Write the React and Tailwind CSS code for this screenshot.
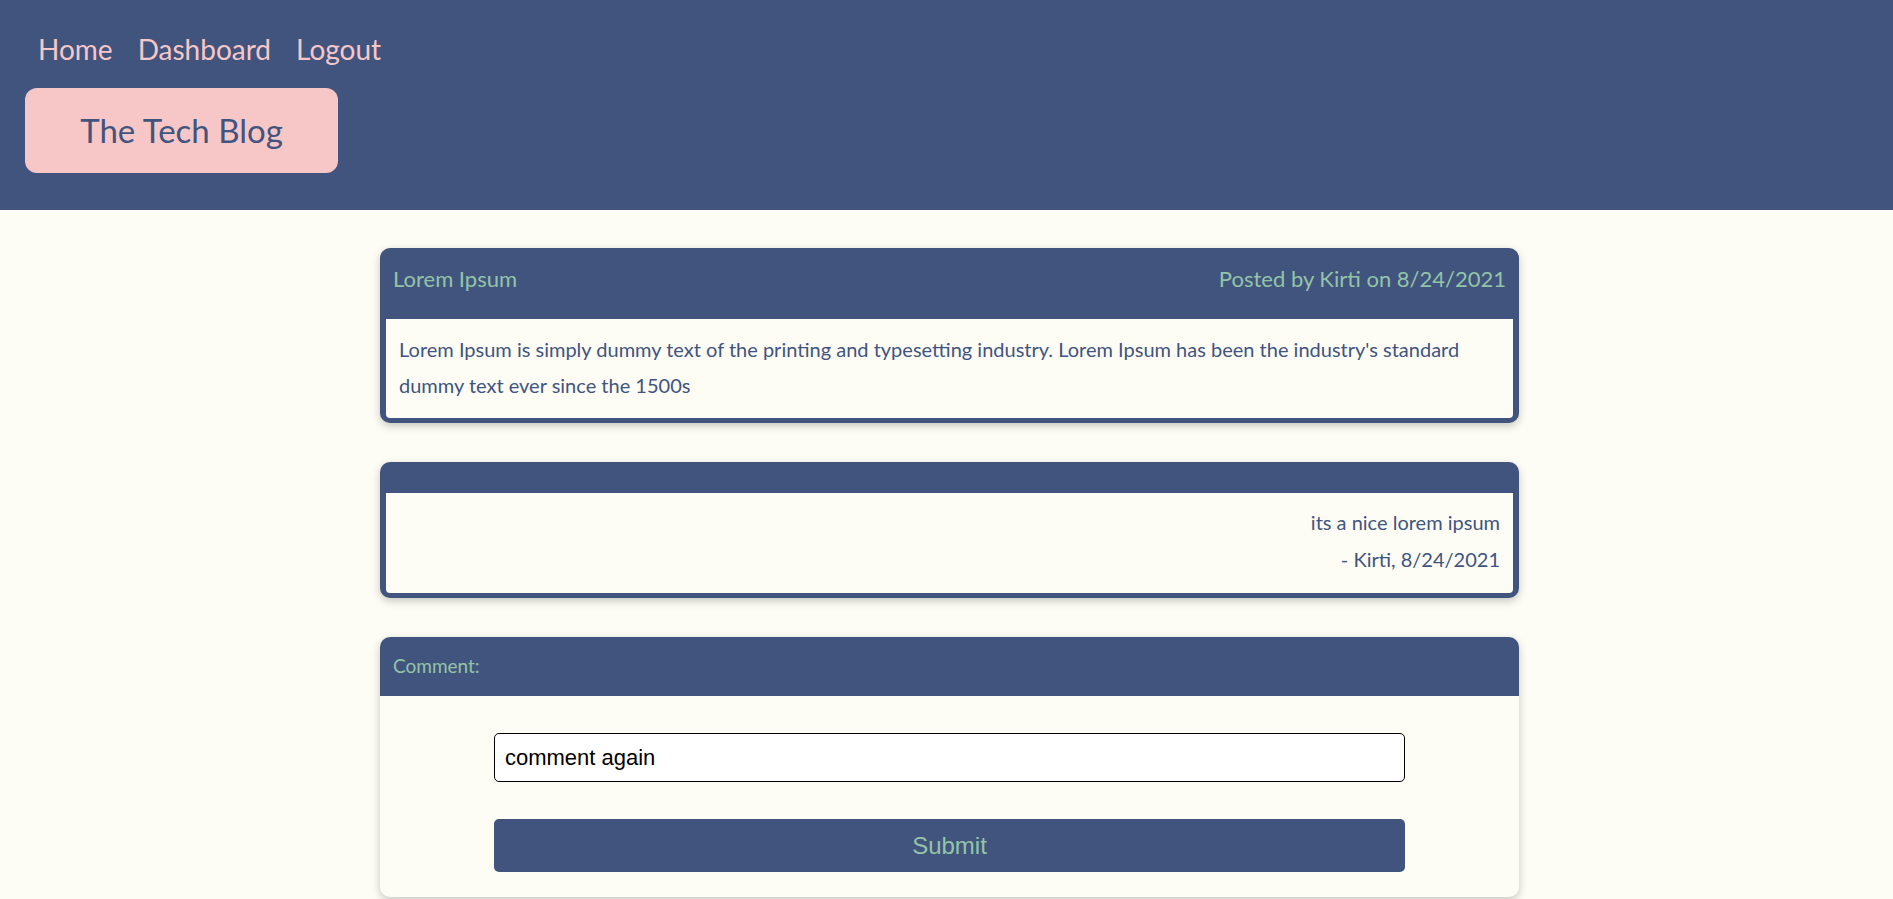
import { useState } from 'react';

const font = { fontFamily: 'Lato, "Noto Sans", sans-serif' };

function Header() {
  return (
    <header className="h-[210px] bg-[#41547e]">
      <nav className="flex gap-[25px] pl-[38px] pt-[33px] text-[28px] leading-8 text-[#f7c7c7]">
        <a href="#">Home</a>
        <a href="#">Dashboard</a>
        <a href="#">Logout</a>
      </nav>
      <div className="ml-[25px] mt-[23px] flex h-[85px] w-[313px] items-center justify-center rounded-[12px] bg-[#f7c7c7]">
        <h1 className="text-[33px] text-[#41547e]">The Tech Blog</h1>
      </div>
    </header>
  );
}

function PostCard() {
  return (
    <section className="rounded-[10px] bg-[#41547e] px-[6px] pb-[5px] shadow-[0_3px_8px_rgba(0,0,0,0.22)]">
      <div className="flex h-[71px] justify-between px-[7px] pt-[18px] text-[22px] leading-[26px] text-[#93c4a7]">
        <span>Lorem Ipsum</span>
        <span>Posted by Kirti on 8/24/2021</span>
      </div>
      <div className="rounded-b-[4px] bg-[#fdfdf6] px-[13px] pb-[15px] pt-[12px] text-[20px] leading-[36px] text-[#41547e]">
        Lorem Ipsum is simply dummy text of the printing and typesetting industry. Lorem Ipsum has been the industry's standard dummy text ever since the 1500s
      </div>
    </section>
  );
}

function CommentCard({ text, author, date }) {
  return (
    <section className="rounded-[10px] bg-[#41547e] px-[6px] pb-[5px] shadow-[0_3px_8px_rgba(0,0,0,0.22)]">
      <div className="h-[31px]" />
      <div className="rounded-b-[4px] bg-[#fdfdf6] px-[13px] pb-[15px] pt-[11px] text-right text-[20px] leading-[37px] text-[#41547e]">
        <p>{text}</p>
        <p>- {author}, {date}</p>
      </div>
    </section>
  );
}

function CommentForm() {
  const [value, setValue] = useState('comment again');
  return (
    <section className="overflow-hidden rounded-[10px] bg-[#fdfdf6] shadow-[0_3px_8px_rgba(0,0,0,0.22)]">
      <div className="h-[59px] bg-[#41547e] px-[13px] pt-[18px] text-[19px] leading-[22px] text-[#93c4a7]">
        Comment:
      </div>
      <form
        className="flex flex-col items-center gap-[37px] pb-[25px] pt-[37px]"
        onSubmit={(e) => e.preventDefault()}
        style={{ fontFamily: '"Liberation Sans", Arial, sans-serif' }}
      >
        <input
          value={value}
          onChange={(e) => setValue(e.target.value)}
          className="h-[49px] w-[80%] rounded-[5px] border border-black bg-white px-[10px] text-[22px] text-black outline-none"
        />
        <button className="h-[53px] w-[80%] rounded-[5px] bg-[#41547e] text-[24px] text-[#93c4a7]">
          Submit
        </button>
      </form>
    </section>
  );
}

export default function App() {
  return (
    <div className="min-h-screen bg-[#fdfdf6]" style={font}>
      <Header />
      <main className="ml-[380px] flex w-[1139px] flex-col gap-[39px] pt-[38px]">
        <PostCard />
        <CommentCard text="its a nice lorem ipsum" author="Kirti" date="8/24/2021" />
        <CommentForm />
      </main>
    </div>
  );
}
